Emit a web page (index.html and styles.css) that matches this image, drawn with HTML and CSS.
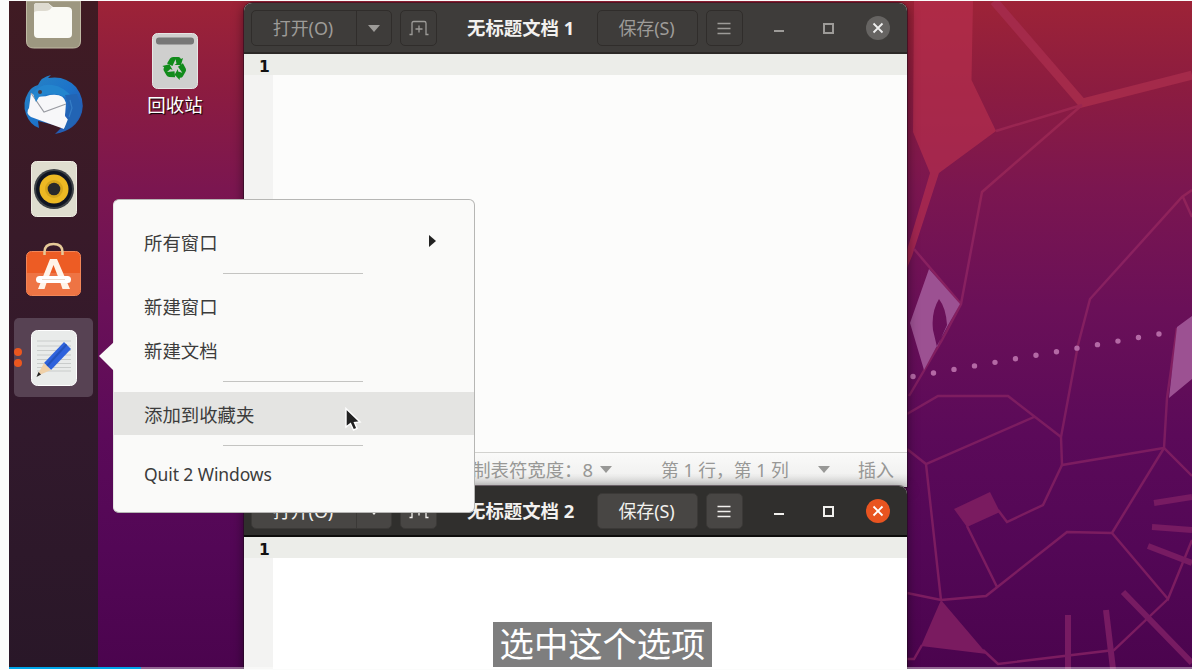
FILE: index.html
```html
<!DOCTYPE html>
<html lang="zh-CN">
<head>
<meta charset="utf-8">
<title>Desktop</title>
<link rel="stylesheet" href="styles.css">
</head>
<body>
<svg class="defs" width="0" height="0">
  <symbol id="newtab" viewBox="0 0 20 16"><path d="M.5 14.500h2.500V3.200q0-1.700 1.700-1.700h10.600q1.700 0 1.700 1.700v11.300H19.500M10 5.500v7M6.500 9h7" fill="none" stroke="currentColor" stroke-width="1.300"/></symbol>
  <symbol id="lines" viewBox="0 0 14 13"><path d="M.5 1.500h13M.5 6.500h13M.5 11.500h13" stroke="currentColor" stroke-width="1.500"/></symbol>
  <symbol id="cross" viewBox="0 0 12 12"><path d="M1.500 1.500l9 9M10.500 1.500l-9 9" stroke="currentColor" stroke-width="1.800"/></symbol>
</svg>
<main class="desktop">
  <svg class="wallpaper" viewBox="9 1 1183 668" preserveAspectRatio="none">
    <defs><linearGradient id="trace" gradientUnits="userSpaceOnUse" x1="0" y1="100" x2="0" y2="420"><stop stop-color="#9c264e"/><stop offset=".5" stop-color="#8a2160"/><stop offset="1" stop-color="#7c1c60"/></linearGradient></defs>
    <g class="shape-red">
      <path class="band" d="M914 1H973L971.500 80L996 131L939 173L912 256L907 268V250L930 173L913 132Z"/>
      <path class="thick" d="M994 1L1082 103L1192 75"/>
      <path class="line" stroke="url(#trace)" d="M996 131L1082 105L982 192L961 304L942 340L909 396M914 249L960 303"/>
      <path class="line" stroke="url(#trace)" d="M1192 190L1182 197L1090 299L1078 345L1061 437L1062 465L1164 448L1167 398L1177 328M1183 197L1192 217"/>
      <path class="line" stroke="url(#trace)" d="M907 414L938 396H1008L1061 437M1034 417L926 464L907 449M926 464L941 600L907 593M1062 465L1043 505L1007 522L998 510M967 526L997 587M941 600L986 596L1067 532L1112 533L1164 448L1192 476M1112 533L1168 599L1192 540M1168 599L1114 650L998 664L983 650M922 645L914 659H907"/>
      <path class="solid" d="M954 509L990 492L1000 512L967 527ZM941 600L987 654L921 646Z"/>
      <path class="spoke" d="M1154 503L1192 497M1152 527L1192 530M1148 546L1192 563M1123 592L1192 663M1106 610L1113 669M1068 615V669"/>
    </g>
    <path class="mauve" fill-rule="evenodd" d="M929 269L960 304L947 327L924 370L910 323ZM939 299Q931 312 933 330L937 347L947 325Q946 308 939 299ZM1177 327L1192 316V379L1169 398Z"/>
    <path class="dots" d="M913 376.500L1159 334"/>
  </svg>

  <nav class="dock">
    <div class="app">
      <svg width="58" height="52" viewBox="0 0 58 52"><path d="M1.500 0h54v40q0 7-7 7h-40q-7 0-7-7z" fill="#9d9780" stroke="#c0baa4"/><path d="M9 5q0-3 3-3h11l5 4h14q5 0 5 4v23q0 4-4 4H13q-4 0-4-4z" fill="#fafaf5"/><path d="M9 12V5q0-3 3-3h11l4 4q-2 4-7 4h-7q-4 0-4 2z" fill="#dedbd0"/></svg>
    </div>
    <div class="app">
      <svg width="64" height="64" viewBox="0 0 64 64">
        <defs><linearGradient id="bird" x1="0" x2="1" y2="1"><stop stop-color="#2785c4"/><stop offset=".5" stop-color="#1d73c9"/><stop offset="1" stop-color="#2c49a4"/></linearGradient></defs>
        <path d="M6 20Q9 14 16 12Q19 4 29 2L26 5Q43 2 54 14Q63 26 60 39Q55 57 33 61L40 54L16 48L17 55Q8 52 4 41Q0 30 6 20Z" fill="url(#bird)"/>
        <path d="M9 20Q17 26 28 22Q42 20 44 30L43 43L47 48L42 56L9 44Q3 40 7 35Z" fill="#f7f7f9"/>
        <path d="M9 20L22 39L44 31" fill="none" stroke="#999ba2" stroke-width="1.200"/>
        <path d="M11 20Q19 10 30 12Q42 13 53 27L41 23Q29 18 17 24L14 29Q12 24 11 20Z" fill="#2385ce"/>
        <path d="M43 22L47 34L43 42L48 41L42 56L36 60Q57 54 60 36L55 21Z" fill="#2264b4"/>
        <path d="M48 27L50 35L47 44" fill="none" stroke="#357dc6" stroke-width="1.200"/>
        <circle cx="18" cy="19" r="2" fill="#4b3b43"/>
      </svg>
    </div>
    <div class="app">
      <svg width="48" height="58" viewBox="0 0 48 58"><rect x="1.500" y="1.500" width="45" height="55" rx="5" fill="#dfddcf" stroke="#efede3"/><circle cx="24" cy="29" r="20" fill="#3d4145"/><circle cx="24" cy="29" r="18" fill="#101522"/><circle cx="24" cy="29" r="14.500" fill="#edb923"/><circle cx="24" cy="29" r="9" fill="#d6a51c"/><circle cx="24" cy="29" r="6.300" fill="#28282b"/></svg>
    </div>
    <div class="app">
      <svg width="58" height="56" viewBox="0 0 58 56"><rect x="1.500" y="9.500" width="54" height="44" rx="5" fill="#ed5c24" stroke="#f28658"/><path d="M2 31h53v17q0 5-5 5H7q-5 0-5-5z" fill="#ee7444"/><path d="M19.500 13V10Q19.500 2 28.500 2T37.500 10v3" fill="none" stroke="#e6c998" stroke-width="2.500"/><path fill-rule="evenodd" d="M25 17H32L45 47H37.500L35.500 41H21.500L19.500 47H13ZM28.500 23L24 34.500H33Z" fill="#fff4e9"/><rect x="11" y="34" width="35" height="7" rx="3.500" fill="#fff"/><path d="M17 37.500H40" stroke="#ead8cb"/></svg>
    </div>
    <div class="app app-active">
      <i class="pip"></i><i class="pip pip-low"></i>
      <svg width="48" height="58" viewBox="0 0 48 58"><rect x="1.500" y="1.500" width="45" height="55" rx="6" fill="#e9ebea" stroke="#fff"/><path d="M7 12h34M7 17h34M7 21.500h34M7 26h34M7 30.500h34M7 34.500h34M7 38.500h34M7 42h34" stroke="#c9cccb"/><path d="M34 13L41 20L21 41L14 34Z" fill="#2e62dc"/><path d="M36.500 15.500L17 37" stroke="#2353bd" stroke-width="2"/><path d="M14 34L21 41L7 47Z" fill="#efd0a8"/><path d="M8.500 43L11 45.500L6.500 48Z" fill="#222"/></svg>
    </div>
  </nav>

  <div class="trash">
    <svg width="48" height="58" viewBox="0 0 48 58"><rect x="1.500" y="1.500" width="45" height="55" rx="5" fill="#cfcfce" stroke="#e6e6e5"/><rect x="5" y="5.500" width="38" height="7" rx="3" fill="#777"/>
      <g fill="#118b1b"><path id="rc" d="M16 31.500L19 26.500Q20 25 22 25H25.500L21.500 34ZM24 25H27.500Q29 25 30 27L32 26L30 33H23.500L25.500 31.500Z"/><use href="#rc" transform="rotate(120 24 36)"/><use href="#rc" transform="rotate(240 24 36)"/></g></svg>
    <span>回收站</span>
  </div>

  <section class="window window-back">
    <header class="bar">
      <div class="split"><button class="open">打开(O)</button><button class="drop"><i class="tri"></i></button></div>
      <button class="tab"><svg width="20" height="16"><use href="#newtab"/></svg></button>
      <h1>无标题文档 1</h1>
      <button class="save">保存(S)</button>
      <button class="burger"><svg width="14" height="13"><use href="#lines"/></svg></button>
      <i class="min"></i><i class="max"></i>
      <span class="close"><svg width="12" height="12"><use href="#cross"/></svg></span>
    </header>
    <div class="editor"><div class="row">1</div></div>
    <footer class="status"><span class="width">制表符宽度：8</span><i class="tri"></i><span class="pos">第 1 行，第 1 列</span><i class="tri"></i><span class="mode">插入</span></footer>
  </section>

  <section class="window window-front">
    <header class="bar">
      <div class="split"><button class="open">打开(O)</button><button class="drop"><i class="tri"></i></button></div>
      <button class="tab"><svg width="20" height="16"><use href="#newtab"/></svg></button>
      <h1>无标题文档 2</h1>
      <button class="save">保存(S)</button>
      <button class="burger"><svg width="14" height="13"><use href="#lines"/></svg></button>
      <i class="min"></i><i class="max"></i>
      <span class="close"><svg width="12" height="12"><use href="#cross"/></svg></span>
    </header>
    <div class="editor"><div class="row">1</div></div>
  </section>

  <div class="menu">
    <svg class="beak" width="16" height="32"><path d="M16 0L0 15L16 31Z" fill="#fafaf9"/></svg>
    <div class="item">所有窗口<i class="more"></i></div>
    <hr>
    <div class="item">新建窗口</div>
    <div class="item item-last">新建文档</div>
    <hr>
    <div class="item item-hover">添加到收藏夹</div>
    <hr>
    <div class="item item-quit">Quit 2 Windows</div>
  </div>
  <svg class="pointer" width="18" height="26" viewBox="0 0 18 26"><path d="M2 1.500V20L6.500 16.500L9.500 23L13 21.500L10.500 15.500L16 15Z" fill="#222" stroke="#fff" stroke-width="1.400"/></svg>

  <p class="caption">选中这个选项</p>
  <div class="progress"><div class="played"></div></div>
</main>
</body>
</html>
```
FILE: styles.css
```css
* { box-sizing: border-box; }
body {
  margin: 0;
  width: 1192px;
  height: 670px;
  padding: 1px 0 1px 9px;
  overflow: hidden;
  background: #fbfcfb;
  font-family: "Noto Sans", "Noto Sans CJK SC", sans-serif;
  font-size: 18px;
}
i { font-style: normal; }
button { font: inherit; padding: 0; margin: 0; border: 0; color: inherit; }
svg { display: block; flex: none; }
.defs { position: absolute; }

.desktop {
  position: relative;
  width: 1183px;
  height: 668px;
  overflow: hidden;
  background: linear-gradient(#9d2337 0, #8c1c40 13%, #7b1650 28%, #6a1058 46%, #5b0a59 65%, #530756 82%, #4b044e 100%);
}
.wallpaper { position: absolute; inset: 0; width: 100%; height: 100%; }
.band { fill: #b9304e; opacity: .65; }
.thick { fill: none; stroke: #a42a4a; stroke-width: 9; }
.line { fill: none; stroke-width: 2.400; }
.solid { fill: #7a1b60; }
.spoke { fill: none; stroke: #771b62; stroke-width: 6; }
.mauve { fill: #9c5192; }
.dots { fill: none; stroke: #b469a5; stroke-width: 5.400; stroke-linecap: round; stroke-dasharray: 0 20.800; }

.dock {
  position: relative;
  width: 89px;
  height: 100%;
  display: flex;
  flex-direction: column;
  align-items: center;
  background: linear-gradient(#401b23, #381a29 35%, #31192c 65%, #291728);
}
.app { height: 84px; width: 79px; display: flex; align-items: center; justify-content: center; flex: none; }
.app:first-child { height: 62px; align-items: flex-start; }
.app:nth-child(4) { height: 78px; }
.app-active { position: relative; height: 79px; margin-top: 9px; border-radius: 5px; background: #574253; }
.pip { position: absolute; left: 0; top: 30px; width: 8px; height: 8px; border-radius: 50%; background: #eb571f; }
.pip-low { top: 41px; }

.trash {
  position: absolute;
  left: 126px;
  top: 31px;
  width: 80px;
  display: flex;
  flex-direction: column;
  align-items: center;
  color: #fff;
  text-shadow: 1px 1px 1px #000;
}
.trash span { line-height: 26px; font-size: 18.500px; margin-top: 2px; }

.window {
  position: absolute;
  left: 235px;
  width: 663px;
  height: 484px;
  display: flex;
  flex-direction: column;
  border-radius: 8px 8px 0 0;
  background: #fcfcfb;
  box-shadow: 0 0 0 1px rgba(30, 10, 25, .5), 0 2px 12px rgba(0, 0, 0, .5);
}
.window-back { top: 2px; }
.window-front { top: 485px; }
.bar {
  height: 51px;
  flex: none;
  display: flex;
  padding: 7px 0 0 7px;
  border-radius: 8px 8px 0 0;
  background: #3e3c3a;
  border-bottom: 2px solid #2c2927;
  color: #9d9b98;
}
.bar button {
  height: 36px;
  display: flex;
  align-items: center;
  justify-content: center;
  background: transparent;
  border: 1px solid #302d2b;
  border-radius: 5px;
}
.split { display: flex; width: 141px; }
.bar .open { width: 106px; padding-right: 2px; border-radius: 5px 0 0 5px; }
.bar .drop { width: 36px; margin-left: -1px; border-radius: 0 5px 5px 0; }
.bar .tab { width: 37px; margin-left: 8px; }
.bar h1 { width: 144px; margin: 0 8px; padding-left: 22px; font-size: 18.400px; line-height: 36px; font-weight: 700; color: #f2f1ef; white-space: nowrap; }
.bar .open, .bar .save { letter-spacing: -.1px; padding-bottom: 2px; }
.bar .save { width: 101px; padding-right: 2px; }
.bar .burger { width: 37px; margin-left: 8px; padding-right: 2px; }
.tri { width: 0; height: 0; border: 6px solid transparent; border-top: 7px solid currentColor; border-bottom: 0; flex: none; }
.min { width: 10px; height: 2px; background: currentColor; margin: 20px 0 0 31px; }
.max { width: 11px; height: 11px; border: 2px solid currentColor; margin: 13px 0 0 39px; }
.close { width: 24px; height: 24px; margin: 6px 0 0 32px; border-radius: 50%; display: flex; align-items: center; justify-content: center; background: #666462; color: #eee; }
.window-front .bar { background: #302f2d; border-bottom-color: #0e0d0c; color: #f1f0ed; }
.window-front .bar button { background: #484644; border-color: #3b3937; }
.window-front .close { background: #e95420; color: #fff; }
.editor { flex: 1; background: linear-gradient(90deg, #f3f3f2 29px, #fcfcfb 29px); }
.window-front .editor { background: linear-gradient(90deg, #f3f3f2 29px, #fff 29px); }
.row { height: 21px; padding-left: 15px; background: #ecede9; color: #111; font: 700 15.500px/27px "DejaVu Sans", sans-serif; }
.status { height: 35px; padding-bottom: 3px; display: flex; align-items: center; flex: none; border-top: 1px solid #d2d2cf; background: linear-gradient(#fafaf9, #f2f2f1 60%, #d6d6d5); color: #989896; white-space: nowrap; }
.status .width { width: 132px; margin-left: 224px; padding-right: 7px; text-align: right; font-size: 18.400px; }
.status .tri { margin-top: 2px; }
.status .pos { margin-left: 49px; width: 157px; font-size: 17.800px; }
.status .mode { margin-left: 28px; }

.menu {
  position: absolute;
  left: 104px;
  top: 198px;
  width: 362px;
  height: 314px;
  padding: 20px 0 0;
  border: 1px solid #b6b6b4;
  border-left-color: #e5e5e4;
  border-radius: 6px;
  background: #fafaf9;
  color: #3c3c3c;
}
.beak { position: absolute; left: -15px; top: 141px; }
.item { height: 43px; padding: 0 38px 0 30px; display: flex; align-items: center; justify-content: space-between; font-size: 18.400px; }
.item-last { height: 44px; padding-top: 1px; }
.item-hover { background: #e4e4e2; }
.item-quit { height: 36px; font-size: 17.500px; letter-spacing: -.1px; }
.menu hr { width: 140px; height: 1px; margin: 10px 0 10px 109px; border: 0; background: #c4c4c2; }
.more { margin-top: -2px; border: 6px solid transparent; border-left: 7px solid #222; border-right: 0; }
.pointer { position: absolute; left: 335px; top: 406px; }

.caption { position: absolute; left: 484px; top: 621px; width: 219px; height: 45px; margin: 0; background: #7e7e7e; color: #fff; text-align: center; font: 34.300px/41px "Noto Sans CJK SC", sans-serif; }
.progress { position: absolute; left: 0; right: 0; bottom: 0; height: 2px; background: rgba(255, 255, 255, .4); }
.played { width: 132px; height: 2px; background: #00a7eb; }
```
